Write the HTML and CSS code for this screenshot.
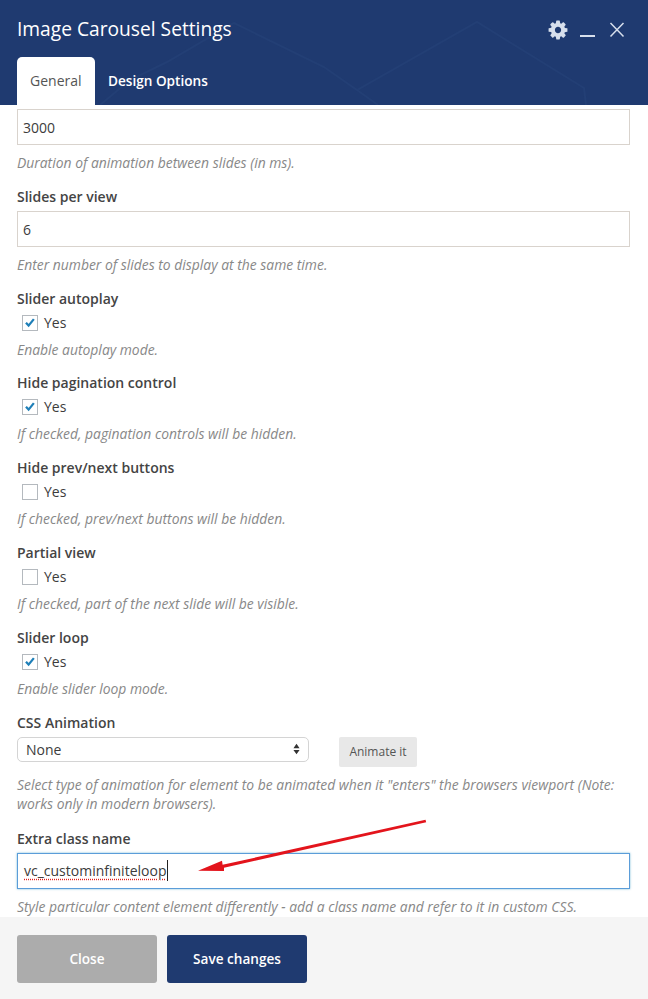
FILE: index.html
```html
<!DOCTYPE html>
<html>

<head>
    <title>Image Carousel Settings</title>
    <link rel="stylesheet" href="styles.css">
</head>

<body>
    <div class="modal">
        <div class="modalHead">
            <svg class="headPattern" viewBox="0 0 648 105" fill="none" stroke="#233f75" stroke-width="2">
                <path d="M100 105L130 80L167 62L234 23L324 67L357 90L477 22L584 88L586 105" />
                <path d="M357 90L378 105" />
            </svg>
            <div class="headTop">
                <h1 class="modalTitle">Image Carousel Settings</h1>
                <div class="headIcons">
                    <svg class="gearIcon" viewBox="0 0 1792 1792">
                        <path fill="#d7dfec" d="M1152 896q0-106-75-181t-181-75-181 75-75 181 75 181 181 75 181-75 75-181zm512-109v222q0 12-8 23t-20 13l-185 28q-19 54-39 91 35 50 107 138 10 12 10 25t-9 23q-27 37-99 108t-94 71q-12 0-26-9l-138-108q-44 23-91 38-16 136-29 186-7 28-36 28h-222q-14 0-24.5-8.5t-11.5-21.5l-28-184q-49-16-90-37l-141 107q-10 9-25 9-14 0-25-11-126-114-165-168-7-10-7-23 0-12 8-23 15-21 51-66.5t54-70.5q-27-50-41-99l-183-27q-13-2-21-12.5t-8-23.5v-222q0-12 8-23t19-13l186-28q14-46 39-92-40-57-107-138-10-12-10-24 0-10 9-23 26-36 98.5-107.5t94.5-71.5q13 0 26 10l138 107q44-23 91-38 16-136 29-186 7-28 36-28h222q14 0 24.5 8.5t11.5 21.5l28 184q49 16 90 37l142-107q9-9 24-9 13 0 25 10 129 119 165 170 7 8 7 22 0 12-8 23-15 21-51 66.5t-54 70.5q26 50 41 98l183 28q13 2 21 12.5t8 23.5z" />
                    </svg>
                    <span class="minIcon"></span>
                    <svg class="closeIcon" viewBox="0 0 16 16" fill="none" stroke="#d7dfec" stroke-width="1.5">
                        <path d="M1.5 1L14.5 14.5M14.5 1L1.5 14.5" />
                    </svg>
                </div>
            </div>
            <div class="tabs">
                <div class="tab active">General</div>
                <div class="tab">Design Options</div>
            </div>
        </div>

        <div class="modalBody">
            <div class="field firstField">
                <input class="textInput" type="text" value="3000">
                <p class="help">Duration of animation between slides (in ms).</p>
            </div>
            <div class="field">
                <div class="label">Slides per view</div>
                <input class="textInput" type="text" value="6">
                <p class="help">Enter number of slides to display at the same time.</p>
            </div>
            <div class="field tightField">
                <div class="label">Slider autoplay</div>
                <div class="checkRow">
                    <span class="checkBox"><svg viewBox="0 0 16 16"><path d="M3.4 7.8L6.4 11L12.4 3.6" /></svg></span>
                    Yes
                </div>
                <p class="help">Enable autoplay mode.</p>
            </div>
            <div class="field">
                <div class="label">Hide pagination control</div>
                <div class="checkRow">
                    <span class="checkBox"><svg viewBox="0 0 16 16"><path d="M3.4 7.8L6.4 11L12.4 3.6" /></svg></span>
                    Yes
                </div>
                <p class="help">If checked, pagination controls will be hidden.</p>
            </div>
            <div class="field">
                <div class="label">Hide prev/next buttons</div>
                <div class="checkRow">
                    <span class="checkBox"></span>
                    Yes
                </div>
                <p class="help">If checked, prev/next buttons will be hidden.</p>
            </div>
            <div class="field">
                <div class="label">Partial view</div>
                <div class="checkRow">
                    <span class="checkBox"></span>
                    Yes
                </div>
                <p class="help">If checked, part of the next slide will be visible.</p>
            </div>
            <div class="field">
                <div class="label">Slider loop</div>
                <div class="checkRow">
                    <span class="checkBox"><svg viewBox="0 0 16 16"><path d="M3.4 7.8L6.4 11L12.4 3.6" /></svg></span>
                    Yes
                </div>
                <p class="help">Enable slider loop mode.</p>
            </div>
            <div class="field selectField">
                <div class="label">CSS Animation</div>
                <div class="selectRow">
                    <div class="selectBox">
                        None
                        <svg class="selectArrows" viewBox="0 0 8 12">
                            <path d="M4 0L7.5 5H0.5ZM4 12L0.5 7H7.5Z" />
                        </svg>
                    </div>
                    <div class="animateBtn">Animate it</div>
                </div>
                <p class="help">Select type of animation for element to be animated when it "enters" the browsers viewport (Note: works only in modern browsers).</p>
            </div>
            <div class="field">
                <div class="label">Extra class name</div>
                <div class="textInput focused"><span class="typed">vc_custominfiniteloop</span></div>
                <p class="help">Style particular content element differently - add a class name and refer to it in custom CSS.</p>
            </div>
        </div>

        <div class="modalFoot">
            <div class="footBtn closeBtn">Close</div>
            <div class="footBtn saveBtn">Save changes</div>
        </div>

        <svg class="redArrow" viewBox="0 0 648 999">
            <path d="M425.5 819.8L426.2 822.2L224 867.8L224 871L198 870.7L222 860.7L222.6 864.8Z" fill="#e3141c" />
        </svg>
    </div>
</body>

</html>
```

FILE: styles.css
```css
* {
    box-sizing: border-box;
}

body {
    margin: 0;
    background-color: #fff;
    color: #3c3c3c;
    font-family: "Open Sans", sans-serif;
    font-size: 14px;
}

.modal {
    position: relative;
    display: flex;
    flex-direction: column;
    width: 648px;
    height: 999px;
    overflow: hidden;
}

.modalHead {
    position: relative;
    flex: none;
    height: 105px;
    padding: 0 17px;
    background-color: #1f3a70;
}

.headPattern {
    position: absolute;
    top: 0;
    left: 0;
    width: 648px;
    height: 105px;
}

.headTop {
    position: relative;
    display: flex;
    justify-content: space-between;
    height: 57px;
}

.modalTitle {
    margin: 15px 0 0;
    color: #fff;
    font-size: 19.2px;
    font-weight: 400;
    line-height: 27px;
}

.headIcons {
    display: flex;
    align-items: flex-start;
    padding: 19px 6px 0 0;
}

.gearIcon {
    width: 22px;
    height: 22px;
}

.minIcon {
    width: 15px;
    height: 2px;
    margin: 16px 0 0 11px;
    background-color: #d7dfec;
}

.closeIcon {
    width: 16px;
    height: 16px;
    margin: 3px 0 0 14px;
}

.tabs {
    position: relative;
    display: flex;
}

.tab {
    height: 48px;
    padding: 14px 13px 0;
    color: #fff;
    font-size: 13.6px;
    font-weight: 600;
    line-height: 20px;
    border-radius: 5px 5px 0 0;
}

.tab.active {
    width: 78px;
    color: #555;
    font-size: 14px;
    font-weight: 400;
    background-color: #fff;
}

.modalBody {
    flex: 1;
    min-height: 0;
    padding: 4px 18px 0 17px;
    overflow: hidden;
}

.field {
    margin-bottom: 15px;
}

.tightField {
    margin-bottom: 14px;
}

.selectField {
    margin-bottom: 16px;
}

.label {
    margin-bottom: 5px;
    color: #444;
    font-weight: 600;
    line-height: 19px;
}

.textInput {
    display: block;
    width: 100%;
    height: 36px;
    padding: 0 5px;
    color: #3c3c3c;
    font-family: inherit;
    font-size: 14px;
    line-height: 34px;
    background-color: #fff;
    border: 1px solid #d9d3cd;
    border-radius: 0;
    outline: none;
}

.textInput.focused {
    padding-left: 6px;
    border-color: #5b9dd9;
    box-shadow: 0 0 2px rgba(30, 140, 190, .6);
}

.typed {
    padding: 1px 1px 1px 0;
    border-right: 1px solid #222;
    text-decoration: underline dotted #e0201c;
    text-underline-offset: 3px;
}

.help {
    margin: 8px 0 0;
    color: #888;
    font-size: 13.9px;
    font-style: italic;
    line-height: 19px;
}

.checkRow {
    display: flex;
    align-items: center;
    gap: 6px;
    height: 19px;
    padding-left: 5px;
}

.checkBox {
    flex: none;
    width: 16px;
    height: 16px;
    background-color: #fff;
    border: 1px solid #b4b9be;
}

.checkBox svg {
    display: block;
    width: 14px;
    height: 14px;
    fill: none;
    stroke: #1e7fb8;
    stroke-width: 2.6;
}

.selectRow {
    display: flex;
    align-items: flex-start;
    gap: 30px;
}

.selectBox {
    display: flex;
    align-items: center;
    justify-content: space-between;
    width: 292px;
    height: 25px;
    padding: 0 8px 1px 8px;
    background-color: #fff;
    border: 1px solid #d4d4d4;
    border-radius: 5px;
}

.selectArrows {
    width: 7px;
    height: 12px;
    fill: #333;
}

.animateBtn {
    width: 78px;
    height: 30px;
    color: #555;
    font-size: 12px;
    line-height: 30px;
    text-align: center;
    background-color: #e8e8e8;
    border-radius: 2px;
}

.modalFoot {
    position: relative;
    flex: none;
    display: flex;
    gap: 10px;
    height: 82px;
    padding: 18px 17px 0;
    background-color: #f5f5f5;
}

.footBtn {
    width: 140px;
    height: 48px;
    color: #fff;
    font-size: 13.6px;
    font-weight: 600;
    line-height: 48px;
    text-align: center;
    border-radius: 3px;
}

.closeBtn {
    background-color: #acacac;
}

.saveBtn {
    background-color: #1f3a70;
}

.redArrow {
    position: absolute;
    top: 0;
    left: 0;
    width: 648px;
    height: 999px;
    pointer-events: none;
}
```
